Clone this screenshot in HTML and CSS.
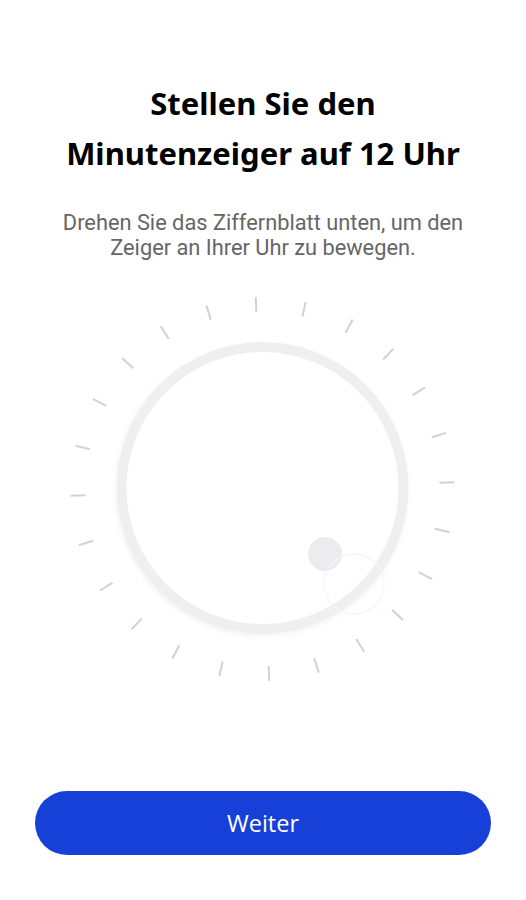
FILE: index.html
```html
<!DOCTYPE html>
<html lang="de">
<head>
<meta charset="utf-8">
<link rel="stylesheet" href="styles.css">
</head>
<body>
<main class="screen">
  <h1 class="title">Stellen Sie den<br>Minutenzeiger auf 12 Uhr</h1>
  <p class="subtitle">Drehen Sie das Ziffernblatt unten, um den<br>Zeiger an Ihrer Uhr zu bewegen.</p>
  <div class="dial">
    <svg width="526" height="400" viewBox="0 0 526 400" xmlns="http://www.w3.org/2000/svg">
      <defs>
        <filter id="sh" x="-20%" y="-20%" width="140%" height="140%">
          <feDropShadow dx="-1" dy="2" stdDeviation="2.5" flood-color="#000" flood-opacity="0.05"/>
        </filter>
      </defs>
      <g id="ticks" stroke="#d2d2d2" stroke-width="2" stroke-linecap="butt"></g>
      <circle cx="262.5" cy="199" r="141" fill="#fff" stroke="#efeff0" stroke-width="10" filter="url(#sh)"/>
      <circle cx="325" cy="265" r="16.5" fill="#ececef" stroke="#e3e3e6" stroke-width="0.6"/>
      <circle cx="354" cy="295" r="30" fill="none" stroke="#eef9fc" stroke-width="1.3"/>
    </svg>
  </div>
  <div class="actions">
    <button class="btn-primary">Weiter</button>
  </div>
</main>
<script>
  (function(){
    var g = document.getElementById('ticks');
    var cx = 262.5, cy = 200, r1 = 177, r2 = 192;
    for (var i = 0; i < 24; i++) {
      var a = (-2 + i * 15) * Math.PI / 180;
      var s = Math.sin(a), c = Math.cos(a);
      var l = document.createElementNS('http://www.w3.org/2000/svg', 'line');
      l.setAttribute('x1', (cx + r1 * s).toFixed(2));
      l.setAttribute('y1', (cy - r1 * c).toFixed(2));
      l.setAttribute('x2', (cx + r2 * s).toFixed(2));
      l.setAttribute('y2', (cy - r2 * c).toFixed(2));
      g.appendChild(l);
    }
  })();
</script>
</body>
</html>
```

FILE: styles.css
```css
html, body {
  margin: 0;
  padding: 0;
  background: #fff;
}

.screen {
  width: 526px;
  height: 900px;
  display: flex;
  flex-direction: column;
  align-items: center;
}

.title {
  margin: 78px 0 0 0;
  font-family: "Noto Sans", "Open Sans", sans-serif;
  font-weight: 700;
  font-size: 31px;
  line-height: 50px;
  color: #000;
  text-align: center;
  white-space: nowrap;
}

.subtitle {
  margin: 32px 0 0 0;
  font-family: Roboto, "Noto Sans", sans-serif;
  font-size: 21.8px;
  line-height: 25px;
  color: #666;
  text-align: center;
  white-space: nowrap;
}

.dial {
  margin-top: 29px;
  width: 526px;
  height: 400px;
}

.dial svg {
  display: block;
}

.actions {
  margin-top: 102px;
  width: 100%;
  padding: 0 35px 0 35px;
  box-sizing: border-box;
}

.btn-primary {
  display: block;
  width: 100%;
  height: 64px;
  border: none;
  border-radius: 32px;
  background: #1740d9;
  color: #fff;
  font-family: "Open Sans", "Noto Sans", sans-serif;
  font-size: 23.5px;
  cursor: pointer;
}
```
